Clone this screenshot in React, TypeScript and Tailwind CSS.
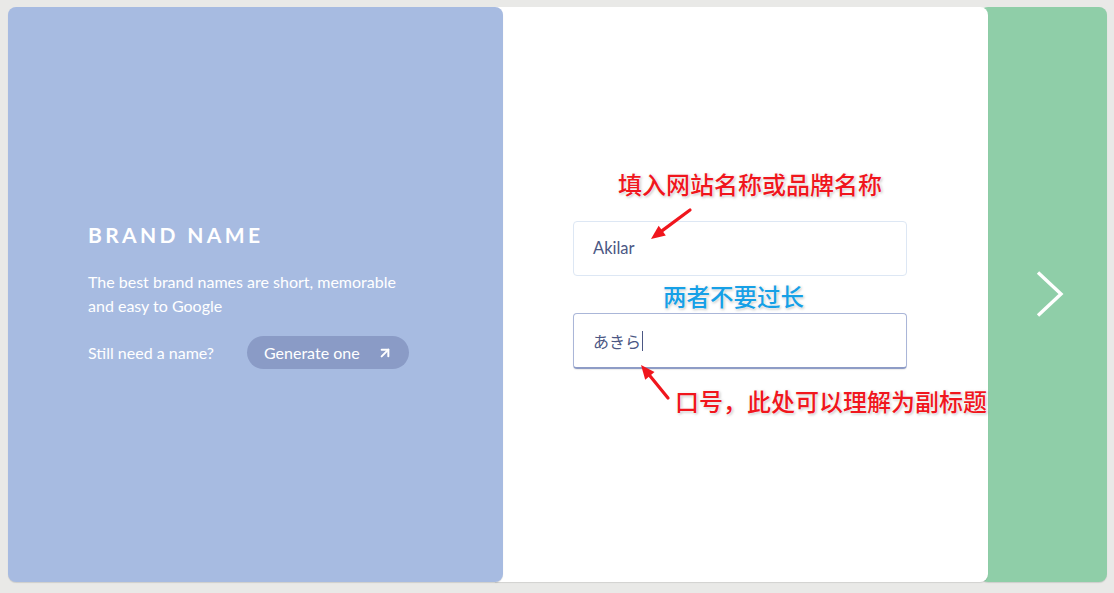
import { ArrowUpRight } from 'lucide-react'

const latin = "font-['Lato','Open_Sans','Noto_Sans',sans-serif]"
const cjk = "font-['Noto_Sans_CJK_SC','Noto_Sans',sans-serif]"
const glow = '[text-shadow:0_0_2px_#fff,0_0_3px_#fff,1px_1px_3px_rgba(0,0,0,0.35)]'

function Arrow({ x1, y1, x2, y2 }: { x1: number; y1: number; x2: number; y2: number }) {
  // line with a filled head at (x2, y2)
  const a = Math.atan2(y2 - y1, x2 - x1)
  const len = 14
  const w = 6
  const bx = x2 - Math.cos(a) * len
  const by = y2 - Math.sin(a) * len
  const p1 = `${bx + Math.sin(a) * w},${by - Math.cos(a) * w}`
  const p2 = `${bx - Math.sin(a) * w},${by + Math.cos(a) * w}`
  return (
    <g>
      <line x1={x1} y1={y1} x2={bx} y2={by} stroke="#f0161d" strokeWidth="3.2" strokeLinecap="round" />
      <polygon points={`${x2},${y2} ${p1} ${p2}`} fill="#f0161d" />
    </g>
  )
}

export default function App() {
  return (
    <div className={`h-[593px] w-full bg-[#e9e9e7] pt-[7px] pb-[11px] pl-[8px] pr-[7px] ${latin}`}>
      <div className="flex h-full">
        {/* Brand panel */}
        <div className="relative z-20 w-[495px] shrink-0 rounded-lg bg-[#a7bbe1] pl-[80px] pt-[217px] text-white shadow-[0_1px_1px_rgba(0,0,0,0.12)]">
          <h1 className="text-[21px] font-bold leading-none tracking-[0.16em]">BRAND NAME</h1>
          <p className="mt-[25px] w-[330px] text-[16px] leading-[24px]">
            The best brand names are short, memorable and easy to Google
          </p>
          <div className="mt-[18px] flex items-center">
            <span className="text-[16px]">Still need a name?</span>
            <button className="ml-[33px] flex h-[33px] w-[162px] items-center justify-between rounded-full bg-[#8a9bc6] pl-[17px] pr-[16px] text-[16px] text-white">
              Generate one
              <ArrowUpRight className="h-4 w-4" strokeWidth={3} />
            </button>
          </div>
        </div>

        {/* Form panel */}
        <div className="relative z-10 -ml-2 w-[493px] shrink-0 rounded-r-lg bg-white pl-[78px] pt-[214px] shadow-[0_1px_1px_rgba(0,0,0,0.1)]">
          <div className="flex h-[55px] w-[334px] items-center rounded border border-[#dde7f4] pl-[19px] text-[16.5px] text-[#4b5784]">
            Akilar
          </div>
          <div className="mt-[37px] flex h-[56px] w-[334px] items-center rounded border border-[#aab6d8] border-b-[#8e9cc6] border-b-2 pl-[19px] text-[16px] text-[#4b5784] shadow-[0_1px_1px_rgba(0,0,0,0.08)]">
            <span className={cjk}>あきら</span>
            <span className="ml-[1px] h-[20px] w-px bg-[#4b5784]" />
          </div>

          {/* annotations */}
          <div className={`absolute left-[123px] top-[161px] text-[24px] font-medium leading-[32px] text-[#f0161d] ${cjk} ${glow}`}>
            填入网站名称或品牌名称
          </div>
          <div className={`absolute left-[168px] top-[273px] text-[23.5px] font-medium leading-[32px] text-[#16a0e6] ${cjk} ${glow}`}>
            两者不要过长
          </div>
          <div className={`absolute left-[180px] top-[378px] whitespace-nowrap text-[24px] font-medium leading-[32px] text-[#f0161d] ${cjk} ${glow}`}>
            口号，此处可以理解为副标题
          </div>
          <svg className="pointer-events-none absolute left-0 top-0" width="493" height="575">
            <Arrow x1={195} y1={203} x2={156} y2={232} />
            <Arrow x1={173} y1={391} x2={146} y2={358} />
          </svg>
        </div>

        {/* Next panel */}
        <div className="-ml-2 flex flex-1 items-center justify-center rounded-lg bg-[#8fcea8] pl-2 shadow-[0_1px_1px_rgba(0,0,0,0.12)]">
          <svg width="28" height="46" viewBox="0 0 28 46" fill="none" className="-mt-[1px] ml-[4px]">
            <polyline points="2,1.5 25,23 2,44.5" stroke="#fff" strokeWidth="3.4" />
          </svg>
        </div>
      </div>
    </div>
  )
}
